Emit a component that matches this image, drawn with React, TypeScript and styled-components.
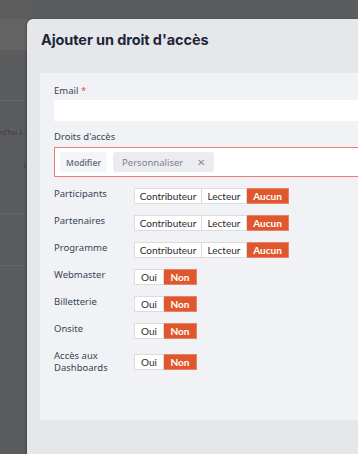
import React from "react";
import styled, { createGlobalStyle } from "styled-components";

const Global = createGlobalStyle`
  html, body { margin: 0; padding: 0; }
  body { width: 358px; height: 454px; overflow: hidden; background: #5b5c5e; font-family: "Open Sans", sans-serif; }
`;

const Page = styled.div`
  display: grid;
  grid-template-columns: 27px 1fr;
  width: 358px;
  height: 454px;
  overflow: hidden;
  background: #5b5c5e;
`;

const BackApp = styled.div`
  display: flex;
  flex-direction: column;
  overflow: hidden;
  white-space: nowrap;
`;

const BackTop = styled.div`
  height: 19px;
  background: #5d5d5d;
`;

const BackBand = styled.div`
  height: 31px;
  background: #646464;
`;

const BackSection = styled.div<{ $h: number }>`
  height: ${(p) => p.$h}px;
  border-bottom: 1px solid #646567;
  display: flex;
  flex-direction: column;
  align-items: flex-end;
  padding-top: 27px;
  box-sizing: border-box;
  gap: 24px;
`;

const BackText = styled.span`
  font-family: "Lato", sans-serif;
  font-size: 7px;
  line-height: 9px;
  color: #3c3d3f;
  margin-right: 1px;
`;

const Modal = styled.div`
  margin-top: 19px;
  width: 380px;
  background: #e6e7eb;
  border-top-left-radius: 6px;
  box-shadow: -1px 0 2px rgba(0, 0, 0, 0.25);
  display: flex;
  flex-direction: column;
`;

const Header = styled.div`
  height: 54px;
  display: flex;
  align-items: center;
  padding: 0 14px;
  box-sizing: border-box;
`;

const Title = styled.h1`
  margin: -14px 0 0 0;
  font-family: "Inter", sans-serif;
  font-weight: 700;
  font-size: 14.5px;
  color: #1e2638;
  letter-spacing: -0.1px;
`;

const Body = styled.div`
  margin-left: 13px;
  height: 347px;
  background: #f1f2f6;
  padding: 12px 14px;
  box-sizing: border-box;
  display: flex;
  flex-direction: column;
`;

const Label = styled.div`
  font-family: "Noto Sans", sans-serif;
  font-size: 9.5px;
  color: #3a4252;
  line-height: 12px;
`;

const Req = styled.span`
  color: #ef4444;
`;

const Input = styled.div`
  margin-top: 3px;
  height: 21px;
  background: #ffffff;
  margin-right: -20px;
`;

const Field = styled.div`
  display: flex;
  flex-direction: column;
  margin-bottom: 10px;
`;

const SelectBox = styled.div`
  margin-top: 4px;
  height: 30px;
  box-sizing: border-box;
  border: 1.5px solid #ef7a6d;
  background: #ffffff;
  margin-right: -20px;
  display: flex;
  align-items: center;
  gap: 6px;
  padding: 0 5px;
`;

const Chip = styled.div<{ $strong?: boolean }>`
  height: 20px;
  border-radius: 3px;
  display: flex;
  align-items: center;
  gap: 14px;
  padding: 0 ${(p) => (p.$strong ? 6 : 9)}px;
  background: ${(p) => (p.$strong ? "#f4f5f7" : "#ebecf0")};
  font-family: "Noto Sans", sans-serif;
  font-size: ${(p) => (p.$strong ? "8.5px" : "9.5px")};
  font-weight: ${(p) => (p.$strong ? 600 : 400)};
  color: ${(p) => (p.$strong ? "#6d7482" : "#7b8190")};
`;

const Close = styled.span`
  font-size: 10px;
  color: #8a8f9b;
`;

const Rows = styled.div`
  display: flex;
  flex-direction: column;
  gap: 11px;
  margin-top: 1px;
`;

const Row = styled.div`
  display: grid;
  grid-template-columns: 80px auto;
  align-items: start;
`;

const RowLabel = styled(Label)<{ $narrow?: boolean }>`
  width: ${(p) => (p.$narrow ? "60px" : "auto")};
`;

const Group = styled.div<{ $offset?: number }>`
  display: flex;
  margin-top: ${(p) => p.$offset ?? 0}px;
  justify-self: start;
`;

const Seg = styled.div<{ $active?: boolean; $w: number }>`
  width: ${(p) => p.$w}px;
  height: 16px;
  box-sizing: border-box;
  display: flex;
  align-items: center;
  justify-content: center;
  font-family: "Lato", sans-serif;
  font-size: 10px;
  font-weight: ${(p) => (p.$active ? 700 : 400)};
  color: ${(p) => (p.$active ? "#ffffff" : "#2b2b2b")};
  background: ${(p) => (p.$active ? "#e1572d" : "#ffffff")};
  border: 1px solid ${(p) => (p.$active ? "#e9826a" : "#dcdcdc")};
  & + & {
    border-left: none;
  }
`;

type RowDef = { label: string; kind: "role" | "yn"; two?: boolean };

const rows: RowDef[] = [
  { label: "Participants", kind: "role" },
  { label: "Partenaires", kind: "role" },
  { label: "Programme", kind: "role" },
  { label: "Webmaster", kind: "yn" },
  { label: "Billetterie", kind: "yn" },
  { label: "Onsite", kind: "yn" },
  { label: "Accès aux Dashboards", kind: "yn", two: true },
];

export default function App() {
  return (
    <>
      <Global />
      <Page>
        <BackApp>
          <BackTop />
          <BackBand />
          <BackSection $h={51} />
          <BackSection $h={113}>
            <BackText>rd'hui à :</BackText>
            <BackText>t</BackText>
          </BackSection>
          <BackSection $h={52} />
        </BackApp>
        <Modal>
          <Header>
            <Title>Ajouter un droit d'accès</Title>
          </Header>
          <Body>
            <Field>
              <Label>
                Email <Req>*</Req>
              </Label>
              <Input />
            </Field>
            <Field>
              <Label>Droits d'accès</Label>
              <SelectBox>
                <Chip $strong>Modifier</Chip>
                <Chip>
                  Personnaliser <Close>✕</Close>
                </Chip>
              </SelectBox>
            </Field>
            <Rows>
              {rows.map((r) => (
                <Row key={r.label}>
                  <RowLabel $narrow={r.two}>{r.label}</RowLabel>
                  {r.kind === "role" ? (
                    <Group>
                      <Seg $w={68}>Contributeur</Seg>
                      <Seg $w={45}>Lecteur</Seg>
                      <Seg $w={42} $active>
                        Aucun
                      </Seg>
                    </Group>
                  ) : (
                    <Group $offset={r.two ? 4 : 0}>
                      <Seg $w={30}>Oui</Seg>
                      <Seg $w={33} $active>
                        Non
                      </Seg>
                    </Group>
                  )}
                </Row>
              ))}
            </Rows>
          </Body>
        </Modal>
      </Page>
    </>
  );
}
